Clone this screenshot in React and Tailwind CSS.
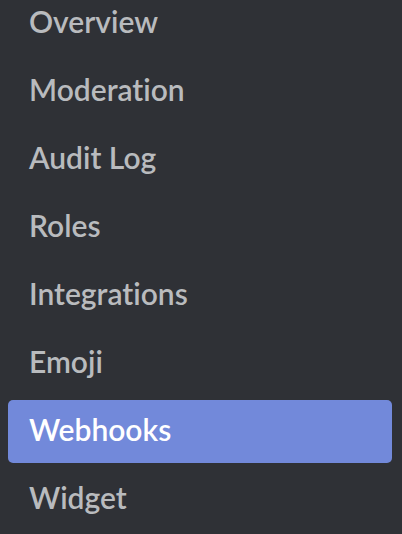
import React from 'react';

const items = ['Overview', 'Moderation', 'Audit Log', 'Roles', 'Integrations', 'Emoji', 'Webhooks', 'Widget'];

export default function App() {
  const active = 'Webhooks';
  return (
    <div className="w-[402px] h-[534px] overflow-hidden bg-[#2f3136]" style={{ fontFamily: 'Lato, "Open Sans", sans-serif' }}>
      <nav className="flex flex-col gap-[5px] w-[384px] ml-2 -mt-[8px]">
        {items.map((item) => (
          <div
            key={item}
            className={`h-[63px] flex items-center pl-[21px] pb-[5px] rounded-[5px] text-[30px] font-semibold leading-none [font-variant-ligatures:none] ${
              item === active ? 'bg-[#7289da] text-white' : 'text-[#b9bbbe]'
            }`}
          >
            {item}
          </div>
        ))}
      </nav>
    </div>
  );
}
